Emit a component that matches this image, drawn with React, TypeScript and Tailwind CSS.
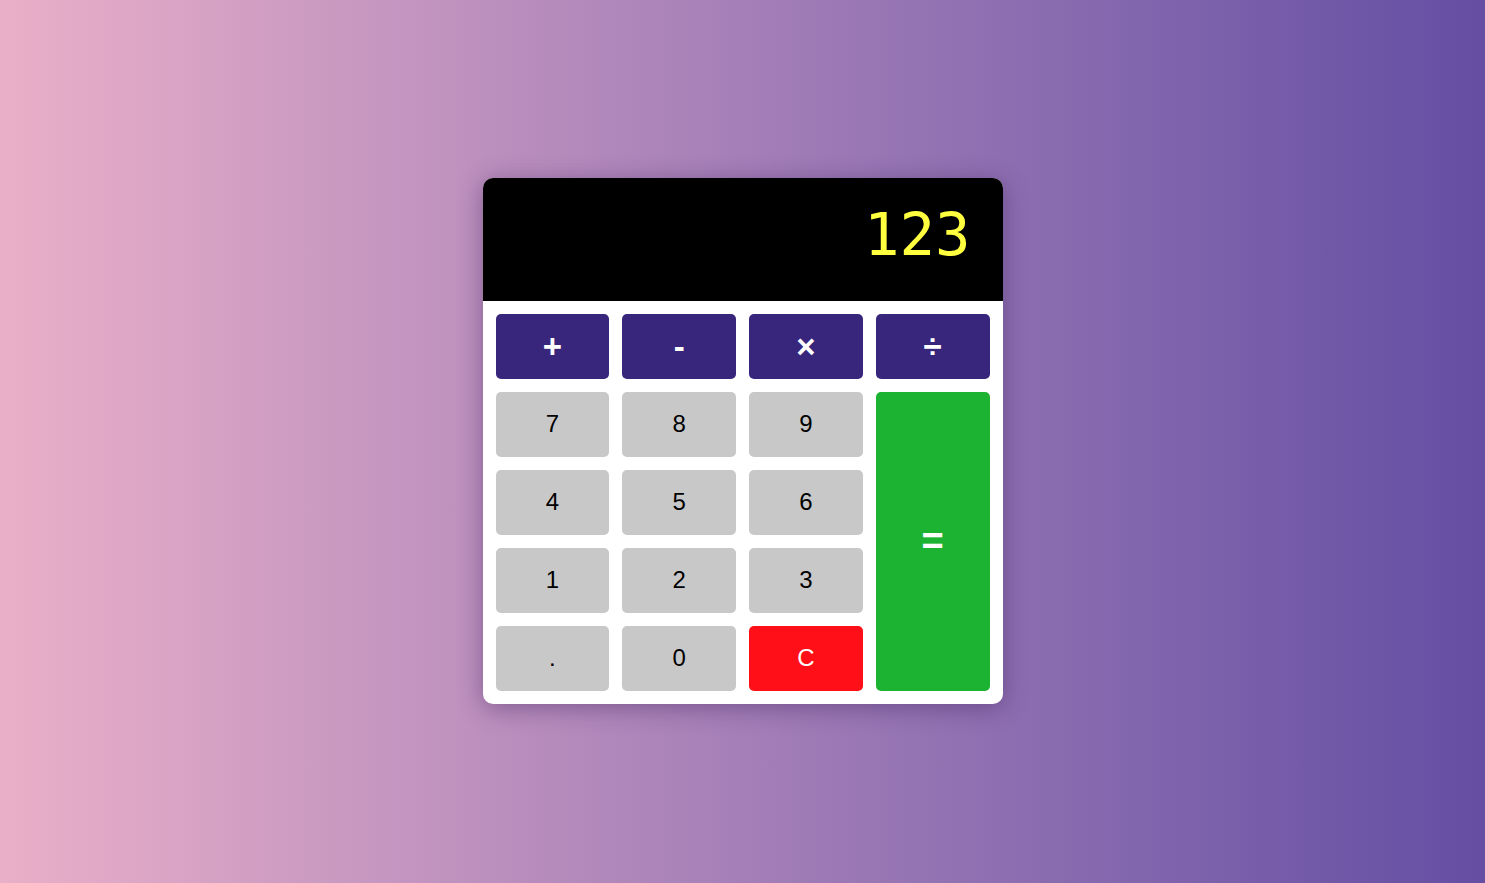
import React, { useState } from 'react';

const ops = ['+', '-', '×', '÷'];

const App: React.FC = () => {
    const [display, setDisplay] = useState('123');

    const press = (v: string) => {
        if (v === 'C') return setDisplay('');
        if (v === '=') {
            try {
                const expr = display.replace(/×/g, '*').replace(/÷/g, '/');
                // eslint-disable-next-line no-new-func
                setDisplay(String(Function(`return (${expr})`)()));
            } catch {
                setDisplay('Error');
            }
            return;
        }
        setDisplay(display + v);
    };

    const num = 'h-[65px] rounded-[5px] bg-[#c8c8c8] text-black text-[24px]';

    return (
        <div
            className="w-full h-[883px] flex items-center justify-center bg-gradient-to-r from-[#eaafc8] to-[#654ea3]"
            style={{ fontFamily: '"Liberation Sans", Arial, sans-serif' }}
        >
            <div className="w-[520px] bg-white rounded-[10px] overflow-hidden shadow-[0_4px_24px_rgba(60,30,90,0.45)] -translate-y-[1px]">
                <div
                    className="h-[123px] bg-black flex items-center justify-end pr-[32px] pb-[7px] text-[59px] text-[#ffff40]"
                    style={{ fontFamily: '"DejaVu Sans Mono", monospace' }}
                >
                    {display}
                </div>
                <div className="grid grid-cols-4 gap-[13px] p-[13px]">
                    {ops.map((o) => (
                        <button
                            key={o}
                            onClick={() => press(o)}
                            className="h-[65px] rounded-[5px] bg-[#37267b] text-white text-[33px] font-bold leading-none"
                        >
                            {o}
                        </button>
                    ))}
                    {['7', '8', '9'].map((n) => (
                        <button key={n} onClick={() => press(n)} className={num}>{n}</button>
                    ))}
                    <button
                        onClick={() => press('=')}
                        className="row-span-4 rounded-[5px] bg-[#1db332] text-white text-[38px] font-bold leading-none"
                    >
                        =
                    </button>
                    {['4', '5', '6', '1', '2', '3', '.', '0'].map((n) => (
                        <button key={n} onClick={() => press(n)} className={num}>{n}</button>
                    ))}
                    <button
                        onClick={() => press('C')}
                        className="h-[65px] rounded-[5px] bg-[#ff0f17] text-white text-[24px]"
                    >
                        C
                    </button>
                </div>
            </div>
        </div>
    );
};

export default App;
